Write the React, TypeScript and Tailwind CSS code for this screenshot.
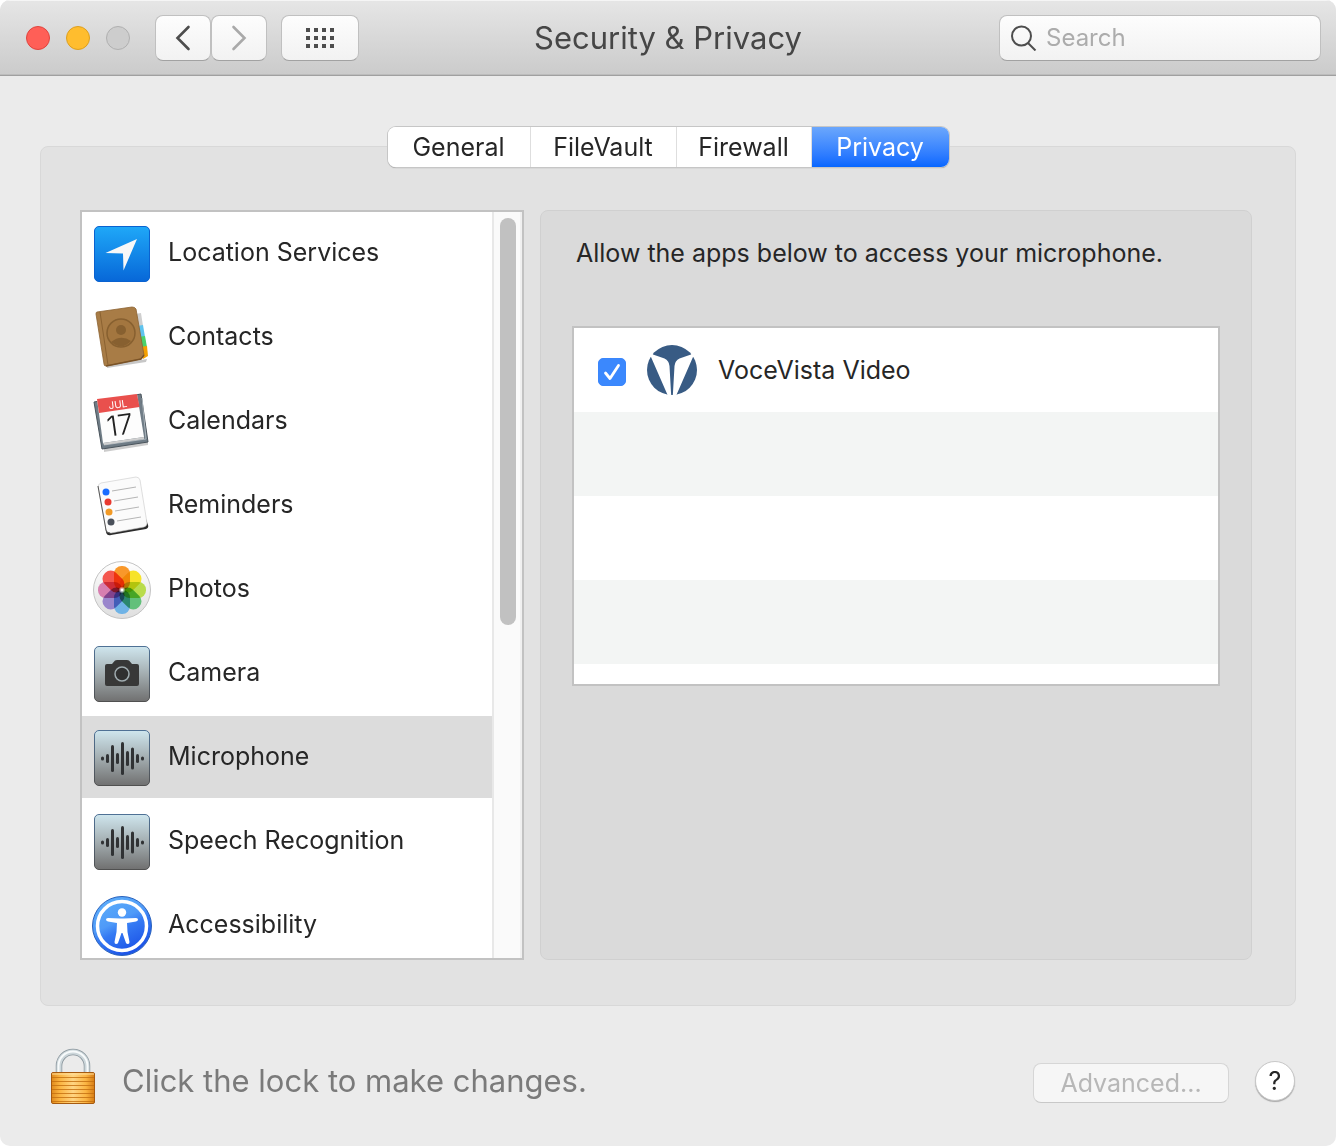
import { useState } from "react";
import type { ReactNode } from "react";

const TABS = [
  { name: "General", width: "w-[143px]" },
  { name: "FileVault", width: "w-[146px]" },
  { name: "Firewall", width: "w-[135px]" },
  { name: "Privacy", width: "w-[137px]" },
];

const PETALS = [
  "#f9982a",
  "#f7e32a",
  "#b9dc4c",
  "#62c07a",
  "#6fb3e6",
  "#9a86cc",
  "#d77fb0",
  "#f4574f",
];

const BARS = [4, 9, 27, 11, 33, 15, 22, 9, 4];

const REMINDER_DOTS = [
  { x: 14, y: 16, color: "#1a6dff" },
  { x: 16, y: 26, color: "#e8392f" },
  { x: 17, y: 36, color: "#f29a26" },
  { x: 19, y: 46, color: "#4a505a" },
];

function Icon({ children }: { children: ReactNode }) {
  return (
    <svg
      viewBox="0 0 60 60"
      className="w-[60px] h-[60px] shrink-0 overflow-visible"
      aria-hidden="true"
    >
      {children}
    </svg>
  );
}

function LocationIcon() {
  return (
    <Icon>
      <defs>
        <linearGradient id="location" x1="0" y1="0" x2="0" y2="1">
          <stop offset="0" stopColor="#1fa8f8" />
          <stop offset="1" stopColor="#0767d8" />
        </linearGradient>
      </defs>
      <rect x="2.5" y="2.5" width="55" height="55" rx="4.5" fill="url(#location)" stroke="#0a62d0" />
      <path d="M45 15L31.5 46.5L31 29.5L13.5 29Z" fill="#f8f8f8" />
    </Icon>
  );
}

function ContactsIcon() {
  return (
    <Icon>
      <path d="M15 60L54 54L55 51L15 57Z" fill="#000" opacity=".22" />
      <path d="M43 6L49 5L51 18L45 19Z" fill="#cfcfcf" />
      <path d="M45 18L51 17L53 29L46 30Z" fill="#5ec3ee" />
      <path d="M46 29L53 28L55 39L48 40Z" fill="#4ad26a" />
      <path d="M48 39L55 38L56 48L51 51Z" fill="#f5a000" />
      <path
        d="M5 4L40 -1Q43 -1 44 1L52 47L49 51L14 58Q12 58 12 56L4 6Q4 4 5 4Z"
        fill="#a87c46"
        stroke="#8b6231"
        strokeWidth="0.8"
      />
      <path d="M8 4L16 57" stroke="#8b6231" />
      <path d="M14 58L49 51L52 47" fill="none" stroke="#7a5327" strokeWidth="1.5" />
      <circle cx="29" cy="25" r="14" fill="#a3763f" stroke="#876030" strokeWidth="1.5" />
      <circle cx="29" cy="22" r="5" fill="#876030" />
      <path d="M19 34Q29 26 39 33Q30 43 19 34Z" fill="#876030" />
    </Icon>
  );
}

function CalendarIcon() {
  return (
    <Icon>
      <path d="M12 60L56 53V49L12 56Z" fill="#000" opacity=".2" />
      <path d="M2 10L49 2L56 50L10 57Z" fill="#6f7c86" stroke="#4a545c" strokeLinejoin="round" />
      <path d="M50 6L54 47L12 53" fill="none" stroke="#a9b3ba" />
      <path d="M5 7L45 2L52 45L11 51Z" fill="#fdfdfd" />
      <path d="M11 51L52 45L52 47L12 53Z" fill="#d0d0d0" />
      <path d="M5 7L45 2L47.5 15L7 21Z" fill="#e9504d" />
      <text
        x="26"
        y="16"
        transform="rotate(-8 26 13)"
        textAnchor="middle"
        fill="#fff"
        className="font-['Inter'] text-[10px]"
      >
        JUL
      </text>
      <text
        x="28"
        y="43"
        transform="rotate(-8 28 33)"
        textAnchor="middle"
        fill="#222"
        className="font-['Inter'] text-[28px] font-light"
      >
        17
      </text>
    </Icon>
  );
}

function RemindersIcon() {
  return (
    <Icon>
      <path d="M8 10L14 56Q15 60 19 59L54 53Q57 52 56 49L53 40" fill="#2b2b2b" />
      <path
        d="M9 7L44 1Q47 1 48 4L55 47Q55 50 52 51L19 57Q15 57 14 54L6 11Q6 8 9 7Z"
        fill="#fbfbfb"
        stroke="#c9c9c9"
        strokeWidth="0.6"
      />
      <path d="M6 10L14 54Q14 57 18 57" fill="none" stroke="#555" />
      {REMINDER_DOTS.map((dot) => (
        <g key={dot.color}>
          <circle cx={dot.x} cy={dot.y} r="3.5" fill={dot.color} />
          <path d={`M${dot.x + 6} ${dot.y - 1}l24 -4`} stroke="#b5b5b5" />
        </g>
      ))}
    </Icon>
  );
}

function PhotosIcon() {
  return (
    <Icon>
      <defs>
        <linearGradient id="photos" x1="0" y1="0" x2="0" y2="1">
          <stop offset="0" stopColor="#ffffff" />
          <stop offset="1" stopColor="#dedede" />
        </linearGradient>
        <radialGradient id="photos-glow">
          <stop offset="0.2" stopColor="#fff" />
          <stop offset="1" stopColor="#fff" stopOpacity="0" />
        </radialGradient>
      </defs>
      <circle cx="30" cy="30" r="28.5" fill="url(#photos)" stroke="#c4c4c4" />
      <g className="isolate">
        {PETALS.map((color, i) => (
          <rect
            key={color}
            x="22"
            y="6"
            width="16"
            height="24"
            rx="7.5"
            fill={color}
            transform={`rotate(${i * 45} 30 30)`}
            className="mix-blend-multiply"
          />
        ))}
      </g>
      <circle cx="30" cy="30" r="3.5" fill="url(#photos-glow)" />
    </Icon>
  );
}

function SteelTile({ id, children }: { id: string; children: ReactNode }) {
  return (
    <Icon>
      <defs>
        <linearGradient id={id} x1="0" y1="0" x2="0" y2="1">
          <stop offset="0" stopColor="#cfe6ee" />
          <stop offset="0.5" stopColor="#a3adb0" />
          <stop offset="1" stopColor="#707070" />
        </linearGradient>
        <linearGradient id={`${id}-edge`} x1="0" y1="0" x2="0" y2="1">
          <stop offset="0" stopColor="#4f7195" />
          <stop offset="1" stopColor="#505050" />
        </linearGradient>
      </defs>
      <rect x="2.5" y="2.5" width="55" height="55" rx="4.5" fill={`url(#${id})`} stroke={`url(#${id}-edge)`} />
      {children}
    </Icon>
  );
}

function CameraIcon() {
  return (
    <SteelTile id="camera">
      <path
        d="M15 20H20L23 16.5Q24 16 25 16H35Q36 16 37 16.5L40 20H45Q47 20 47 22V40Q47 42 45 42H15Q13 42 13 40V22Q13 20 15 20Z"
        fill="#383838"
      />
      <circle cx="30" cy="30" r="7" fill="#303030" stroke="#a0acb0" strokeWidth="1.5" />
    </SteelTile>
  );
}

function WaveIcon({ id }: { id: string }) {
  return (
    <SteelTile id={id}>
      {BARS.map((height, i) => (
        <rect
          key={i}
          x={9 + i * 5}
          y={30.5 - height / 2}
          width="3"
          height={height}
          rx="1.5"
          fill="#303234"
        />
      ))}
    </SteelTile>
  );
}

function AccessibilityIcon() {
  return (
    <Icon>
      <defs>
        <linearGradient id="access" x1="0" y1="0" x2="0.5" y2="1">
          <stop offset="0" stopColor="#5fb2fa" />
          <stop offset="0.5" stopColor="#4f9af8" />
          <stop offset="0.65" stopColor="#3479f3" />
          <stop offset="1" stopColor="#1d55e8" />
        </linearGradient>
      </defs>
      <circle cx="30" cy="30" r="29.5" fill="url(#access)" stroke="#2a62bc" />
      <circle cx="30" cy="30" r="24.5" fill="none" stroke="#fff" strokeWidth="3.5" />
      <circle cx="30" cy="16.5" r="4.2" fill="#fff" />
      <path
        d="M16 22L28 22.5H32L44 22Q46 22 46 23.5Q46 25 44 25.5L35 27L35.5 36L37.5 46Q37.5 48 36 48Q34.5 48 34 47L30.5 37H29.5L26 47Q25.5 48 24 48Q22.5 48 22.5 46L24.5 36L25 27L16 25.5Q14 25 14 23.5Q14 22 16 22Z"
        fill="#fff"
      />
    </Icon>
  );
}

function VoceVistaLogo() {
  return (
    <svg viewBox="0 0 50 50" className="w-[50px] h-[50px] shrink-0" aria-hidden="true">
      <circle cx="25" cy="25" r="25" fill="#385b84" />
      <path d="M-1 11L4 12L21 51H24.2L22.5 21Q22 15.5 17.5 13.5L6 9.5L2 4Z" fill="#fff" />
      <path d="M51 11L46 12L29 51H25.8L27.5 21Q28 15.5 32.5 13.5L44 9.5L48 4Z" fill="#fff" />
    </svg>
  );
}

function LockIcon() {
  return (
    <svg viewBox="0 0 46 57" className="w-[46px] h-[57px]" aria-hidden="true">
      <defs>
        <linearGradient id="brass" x1="0" y1="0" x2="1" y2="0">
          <stop offset="0" stopColor="#e08a1c" />
          <stop offset="0.2" stopColor="#fbb542" />
          <stop offset="0.5" stopColor="#ffd583" />
          <stop offset="0.8" stopColor="#fbb542" />
          <stop offset="1" stopColor="#d77c14" />
        </linearGradient>
      </defs>
      <path d="M9 26V18A14 14 0 0 1 37 18V26" fill="none" stroke="#89959c" strokeWidth="6.5" />
      <path d="M9 26V18A14 14 0 0 1 37 18V26" fill="none" stroke="#ccd6da" strokeWidth="5" />
      <path d="M8.5 26V18A14.5 14.5 0 0 1 37.5 18V26" fill="none" stroke="#f7fafb" strokeWidth="2" />
      <rect x="1.5" y="24.500" width="43" height="31" rx="1.5" fill="url(#brass)" stroke="#a65a10" />
      {[29, 33, 37, 41, 45, 49, 53].map((y) => (
        <path key={y} d={`M2 ${y}.5H44`} stroke="#c46f10" opacity=".8" />
      ))}
      <path d="M2 26H44" stroke="#ffe0a0" />
    </svg>
  );
}

const SERVICES = [
  { name: "Location Services", icon: <LocationIcon /> },
  { name: "Contacts", icon: <ContactsIcon /> },
  { name: "Calendars", icon: <CalendarIcon /> },
  { name: "Reminders", icon: <RemindersIcon /> },
  { name: "Photos", icon: <PhotosIcon /> },
  { name: "Camera", icon: <CameraIcon /> },
  { name: "Microphone", icon: <WaveIcon id="microphone" /> },
  { name: "Speech Recognition", icon: <WaveIcon id="speech" /> },
  { name: "Accessibility", icon: <AccessibilityIcon /> },
];

const toolbarButton =
  "flex h-[46px] items-center justify-center rounded-lg border border-[#c0c0c0] border-b-[#a2a2a2] bg-linear-to-b from-[#fdfdfd] to-[#f2f2f2]";

function TitleBar() {
  return (
    <header className="grid h-[76px] shrink-0 grid-cols-[1fr_auto_1fr] items-center border-b border-[#a0a0a0] bg-linear-to-b from-[#e6e6e6] to-[#cbcbcb] px-[15px] pt-px shadow-[inset_0_1px_0_#f5f5f5,inset_0_-1px_0_#bcbcbc]">
      <div className="flex items-center">
        <div className="ml-[11px] flex gap-4">
          <button aria-label="Close" className="size-6 rounded-full border border-[#e0443e] bg-[#ff5f57]" />
          <button aria-label="Minimize" className="size-6 rounded-full border border-[#dd9f1f] bg-[#ffbd2e]" />
          <button aria-label="Zoom" disabled className="size-6 rounded-full border border-[#b0b0b0] bg-[#cdcdcd]" />
        </div>
        <button aria-label="Back" className={`${toolbarButton} ml-[25px] w-14`}>
          <svg viewBox="0 0 16 26" className="h-[26px] w-4" fill="none" stroke="#4d4d4d" strokeWidth="2.6" strokeLinecap="round">
            <path d="M13.5 2L2.5 13L13.5 24" />
          </svg>
        </button>
        <button aria-label="Forward" disabled className={`${toolbarButton} w-14`}>
          <svg viewBox="0 0 16 26" className="h-[26px] w-4" fill="none" stroke="#a9a9a9" strokeWidth="2.6" strokeLinecap="round">
            <path d="M2.5 2L13.5 13L2.5 24" />
          </svg>
        </button>
        <button aria-label="Show All" className={`${toolbarButton} ml-[14px] w-[78px]`}>
          <svg viewBox="0 0 28 20" className="h-5 w-7" fill="#4d4d4d">
            {[0, 8, 16].map((y) =>
              [0, 8, 16, 24].map((x) => <rect key={`${x}-${y}`} x={x} y={y} width="4" height="4" />)
            )}
          </svg>
        </button>
      </div>
      <h1 className="text-[31px] leading-10 text-[#464646]">Security &amp; Privacy</h1>
      <label className={`${toolbarButton} w-[322px] justify-self-end pl-[11px]`}>
        <svg viewBox="0 0 26 26" className="size-[26px] shrink-0" fill="none" stroke="#4d4d4d" strokeWidth="2">
          <circle cx="10.5" cy="11" r="9.5" />
          <path d="M17 18L24.5 25.5" />
        </svg>
        <input
          type="search"
          aria-label="Search"
          placeholder="Search"
          className="ml-[9px] w-full min-w-0 bg-transparent text-[24px] leading-8 outline-none placeholder:text-[#acacac]"
        />
      </label>
    </header>
  );
}

export default function App() {
  const [tab, setTab] = useState("Privacy");
  const [service, setService] = useState("Microphone");
  const [allowed, setAllowed] = useState(true);

  return (
    <div className="h-screen min-h-[700px] bg-white font-['Inter','Liberation_Sans',sans-serif] text-[25px] leading-8 text-[#262626]">
      <div className="flex h-full flex-col overflow-hidden rounded-[10px] bg-[#ebebeb]">
        <TitleBar />

        <main className="flex min-h-0 flex-1 flex-col px-10 pt-[70px]">
          <section className="flex min-h-0 flex-1 flex-col rounded-lg border border-[#d8d8d8] bg-[#e2e2e2]">
            <div
              role="tablist"
              className="-mt-5 flex h-10 shrink-0 self-center overflow-hidden rounded-lg bg-white shadow-[0_0_0_1px_#c6c6c6,0_1px_1px_#808080]"
            >
              {TABS.map((item) => (
                <button
                  key={item.name}
                  role="tab"
                  aria-selected={tab === item.name}
                  onClick={() => setTab(item.name)}
                  className={`${item.width} ${
                    tab === item.name
                      ? "bg-linear-to-b from-[#6ba7fc] to-[#0566ff] text-white"
                      : "border-r border-[#dedede] bg-white"
                  }`}
                >
                  {item.name}
                </button>
              ))}
            </div>

            <div className="mt-[43px] flex min-h-0 flex-1 gap-4 pr-[43px] pb-[45px] pl-[39px]">
              {/* Services list */}
              <div className="flex w-[444px] shrink-0 overflow-hidden border-2 border-[#c2c2c2] bg-white">
                <ul className="min-w-0 flex-1 overflow-hidden">
                  {SERVICES.map((item) => (
                    <li key={item.name} className="h-[84px]">
                      <button
                        onClick={() => setService(item.name)}
                        className={`flex h-[82px] w-full items-center gap-4 pt-[2px] pl-[10px] text-left ${
                          service === item.name ? "bg-[#dcdcdc]" : ""
                        }`}
                      >
                        {item.icon}
                        <span className="pb-1">{item.name}</span>
                      </button>
                    </li>
                  ))}
                </ul>
                <div className="w-[30px] border-r-2 border-l-2 border-r-[#f0f0f0] border-l-[#e8e8e8] bg-[#fafafa] px-[6px] pt-[6px]">
                  <div className="h-[55%] w-4 rounded-full bg-[#c1c1c1]" />
                </div>
              </div>

              {/* Apps with access */}
              <div className="flex min-w-0 flex-1 flex-col rounded-lg border border-[#d0d0d0] bg-[#dadada] px-[31px] pt-[26px]">
                <p className="pl-1">Allow the apps below to access your microphone.</p>
                <ul className="mt-[57px] h-[360px] overflow-hidden border-2 border-[#c2c2c2] bg-white">
                  <li className="h-[84px]">
                    <label className="flex h-full items-center pl-6">
                      <span className="mt-1 grid">
                        <input
                          type="checkbox"
                          checked={allowed}
                          onChange={(e) => setAllowed(e.target.checked)}
                          className="col-start-1 row-start-1 size-7 appearance-none rounded-[5px] border border-[#b5b5b5] bg-white checked:border-[#3a86fc] checked:bg-[#3b88fd]"
                        />
                        {allowed && (
                          <svg
                            viewBox="0 0 28 28"
                            className="pointer-events-none col-start-1 row-start-1 size-7"
                            fill="none"
                            stroke="#fff"
                            strokeWidth="2.8"
                            strokeLinecap="round"
                            strokeLinejoin="round"
                          >
                            <path d="M7.5 15L12 20.5L20.5 7.5" />
                          </svg>
                        )}
                      </span>
                      <span className="mr-[21px] ml-[21px]">
                        <VoceVistaLogo />
                      </span>
                      <span>VoceVista Video</span>
                    </label>
                  </li>
                  <li className="h-[84px] bg-[#f3f5f4]" />
                  <li className="h-[84px]" />
                  <li className="h-[84px] bg-[#f3f5f4]" />
                </ul>
              </div>
            </div>
          </section>
        </main>

        <footer className="flex h-[140px] shrink-0 items-center pt-3 pr-[41px] pl-[50px]">
          <button aria-label="Unlock" className="mb-3">
            <LockIcon />
          </button>
          <p className="mb-[2px] ml-[26px] text-[31px] leading-10 text-[#7a7a7a]">Click the lock to make changes.</p>
          <button
            disabled
            className="mt-[2px] ml-auto h-10 w-[196px] rounded-lg border border-[#d6d6d6] border-b-[#c8c8c8] bg-[#f6f6f6] text-[#b7b7b7]"
          >
            Advanced...
          </button>
          <button
            aria-label="Help"
            className="mb-[2px] ml-[26px] size-10 rounded-full border border-[#c8c8c8] bg-white shadow-[0_1px_1px_#a8a8a8]"
          >
            ?
          </button>
        </footer>
      </div>
    </div>
  );
}
